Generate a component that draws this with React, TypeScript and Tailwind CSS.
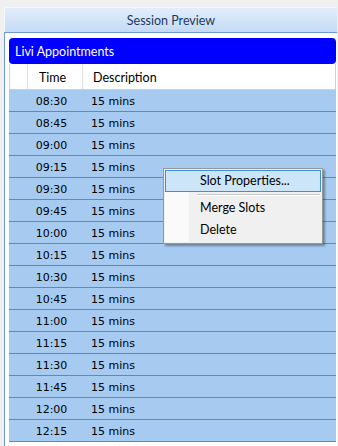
import React from "react";

const times = [
  "08:30","08:45","09:00","09:15","09:30","09:45","10:00","10:15",
  "10:30","10:45","11:00","11:15","11:30","11:45","12:00","12:15",
];

export default function App() {
  return (
    <div className="relative w-[338px] h-[446px] overflow-hidden bg-[#f0f0f0] pt-[7px] pl-[4px]" style={{ fontFamily: 'Lato, "Noto Sans", sans-serif' }}>
      <div className="w-[333px] h-[439px] flex flex-col">
        <div className="h-[25px] shrink-0 border-t border-l border-[#f4f8fd] bg-gradient-to-b from-[#e3eefb] to-[#c3daf5] flex items-center justify-center pt-[2px] text-[12.5px] text-[#1e395b]">
          Session Preview
        </div>
        <div className="flex-1 bg-white border-t border-l border-[#6f98d4] pl-[4px] pt-[5px]">
          <div className="w-[327px] h-[26px] rounded-[4px] bg-[#0000ff] text-white text-[12.5px] flex items-center pl-[6px] pt-[2px]">
            Livi Appointments
          </div>
          <div className="w-[327px] h-[26px] flex border-x border-b border-[#d0d0d0] bg-white text-[12.5px] text-black">
            <div className="w-[18px] border-r border-[#e0e0e0]" />
            <div className="w-[55px] border-r border-[#e0e0e0] flex items-center justify-center pr-[5px] pt-[3px]">Time</div>
            <div className="flex-1 flex items-center pl-[10px] pt-[3px]">Description</div>
          </div>
          {times.map((t) => (
            <div key={t} className="w-[327px] h-[22px] flex bg-[#a6caf0] border-b border-[#6c87a6] text-[11px] text-black pt-[4px]" style={{ fontFamily: '"DejaVu Sans", sans-serif' }}>
              <div className="w-[19px]" />
              <div className="w-[55px] flex items-center justify-center pr-[8px]">{t}</div>
              <div className="flex-1 flex items-center pl-[8px]">15 mins</div>
            </div>
          ))}
        </div>
      </div>

      <div className="absolute left-[163px] top-[168px] w-[160px] h-[76px] border border-[#979797] bg-[#f0f0f0] shadow-[2px_2px_2px_rgba(0,0,0,0.35)] p-[1px] text-[12.5px] text-black">
        <div className="absolute left-[1px] top-[1px] bottom-[1px] w-[24px] bg-[#fafafa]" />
        <div className="relative h-[22px] border border-[#3d8ee0] bg-[#cde5f9] flex items-center pl-[34px] pt-[1px]">
          Slot Properties...
        </div>
        <div className="relative h-[5px] pl-[32px] pt-[2px]">
          <div className="h-[1px] bg-[#c8c8c8] mr-[1px]" />
          <div className="h-[1px] bg-white mr-[1px]" />
        </div>
        <div className="relative h-[22px] flex items-center pl-[35px] pt-[1px]">Merge Slots</div>
        <div className="relative h-[22px] flex items-center pl-[35px] pt-[1px]">Delete</div>
      </div>
    </div>
  );
}
